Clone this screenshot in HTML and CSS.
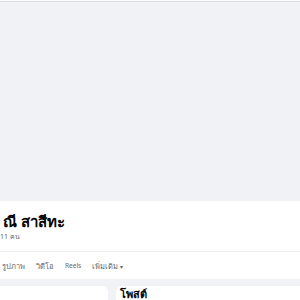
FILE: index.html
```html
<!DOCTYPE html>
<html lang="th">
<head>
<meta charset="utf-8">
<link rel="stylesheet" href="styles.css">
</head>
<body>
<div class="topline"></div>
<div class="cover"></div>
<section class="header">
  <div class="identity">
    <h1 class="name">ณี สาสีทะ</h1>
    <div class="friends">11 คน</div>
  </div>
  <nav class="tabs">
    <span class="tab">รูปภาพ</span>
    <span class="tab">วิดีโอ</span>
    <span class="tab latin">Reels</span>
    <span class="tab">เพิ่มเติม <span class="caret">▾</span></span>
  </nav>
</section>
<main class="content">
  <div class="card left"></div>
  <div class="card right"><h2 class="card-title">โพสต์</h2></div>
</main>
</body>
</html>
```
FILE: styles.css
```css
html, body {
  margin: 0;
  padding: 0;
  background: #f0f2f5;
  font-family: "Noto Sans", "Liberation Sans", sans-serif;
  overflow: hidden;
}
body {
  height: 300px;
}
.topline {
  height: 1px;
  background: #fafafa;
  border-bottom: 1px solid #dddfe2;
}
.cover {
  height: 199px;
  background: #f0f2f5;
}
.header {
  background: #fff;
}
.identity {
  height: 51px;
  border-bottom: 1px solid #eceef1;
  box-sizing: border-box;
  padding: 10px 0 0 3px;
}
.name {
  margin: 0;
  font-size: 15px;
  line-height: 20px;
  font-weight: 700;
  color: #050505;
}
.friends {
  margin-left: -3px;
  margin-top: 1px;
  font-size: 7px;
  line-height: 10px;
  color: #65676b;
}
.tabs {
  height: 27px;
  display: flex;
  align-items: center;
  gap: 11px;
  padding-left: 2px;
  font-size: 7.5px;
  font-weight: 400;
  color: #65676b;
}
.latin {
  font-size: 6.5px;
}
.caret {
  font-size: 6px;
}
.content {
  display: flex;
  gap: 8px;
  margin-top: 7px;
}
.card {
  background: #fff;
  height: 14px;
}
.left {
  width: 108px;
  border-top-right-radius: 6px;
}
.right {
  flex: 1;
  border-top-left-radius: 6px;
  padding: 2px 0 0 4px;
}
.card-title {
  margin: 0;
  font-size: 11px;
  line-height: 12px;
  font-weight: 700;
  color: #050505;
}
```
